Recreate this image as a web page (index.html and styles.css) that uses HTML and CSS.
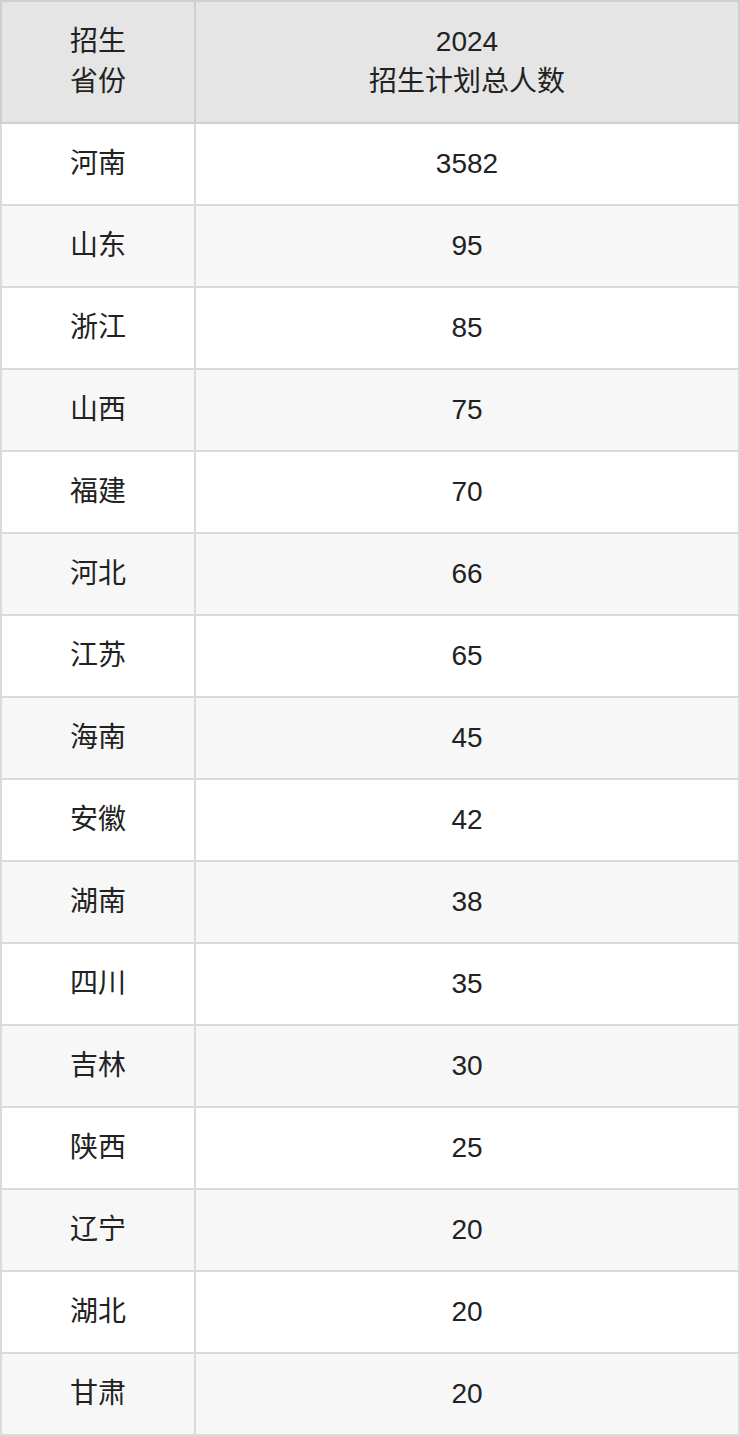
FILE: index.html
```html
<!DOCTYPE html>
<html lang="zh">
<head>
<meta charset="utf-8">
<link rel="stylesheet" href="styles.css">
</head>
<body>
<table class="plan">
  <thead>
    <tr><th class="c1">招生<br>省份</th><th>2024<br>招生计划总人数</th></tr>
  </thead>
  <tbody>
    <tr><td class="c1">河南</td><td>3582</td></tr>
    <tr><td class="c1">山东</td><td>95</td></tr>
    <tr><td class="c1">浙江</td><td>85</td></tr>
    <tr><td class="c1">山西</td><td>75</td></tr>
    <tr><td class="c1">福建</td><td>70</td></tr>
    <tr><td class="c1">河北</td><td>66</td></tr>
    <tr><td class="c1">江苏</td><td>65</td></tr>
    <tr><td class="c1">海南</td><td>45</td></tr>
    <tr><td class="c1">安徽</td><td>42</td></tr>
    <tr><td class="c1">湖南</td><td>38</td></tr>
    <tr><td class="c1">四川</td><td>35</td></tr>
    <tr><td class="c1">吉林</td><td>30</td></tr>
    <tr><td class="c1">陕西</td><td>25</td></tr>
    <tr><td class="c1">辽宁</td><td>20</td></tr>
    <tr><td class="c1">湖北</td><td>20</td></tr>
    <tr><td class="c1">甘肃</td><td>20</td></tr>
  </tbody>
</table>
</body>
</html>
```

FILE: styles.css
```css
html, body {
  margin: 0;
  padding: 0;
  background: #fff;
}
.plan {
  width: 740px;
  border-collapse: collapse;
  table-layout: fixed;
  font-family: "Liberation Sans", Arial, "Noto Sans CJK SC", sans-serif;
  font-size: 28px;
  color: #222;
}
.plan th, .plan td {
  border: 2px solid #dadada;
  text-align: center;
  vertical-align: middle;
  padding: 0;
  font-weight: normal;
  line-height: 40px;
}
.plan th {
  background: #e5e5e5;
  border-color: #cfcfcf;
  height: 120px;
}
.plan td {
  height: 80px;
}
.plan .c1 {
  width: 192px;
}
.plan tbody tr:nth-child(even) td {
  background: #f7f7f7;
}
```
